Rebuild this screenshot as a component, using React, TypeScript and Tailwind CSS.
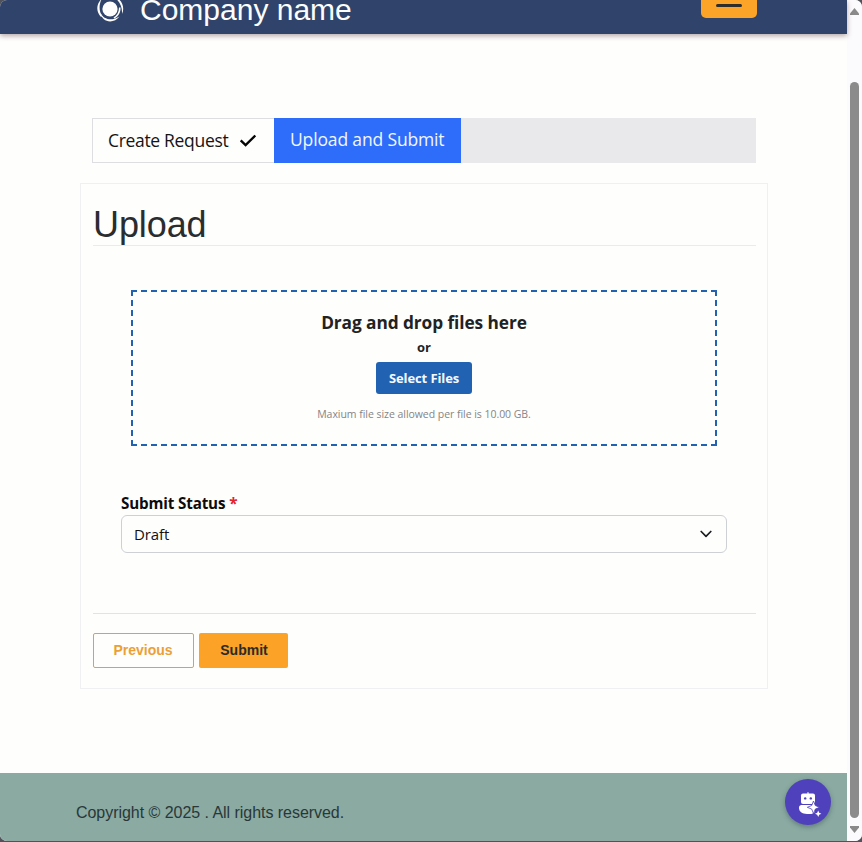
const segoe = "font-['Open_Sans','Noto_Sans',sans-serif]";
const arial = "font-['Liberation_Sans',Arial,sans-serif]";

function Header() {
  return (
    <header className="relative z-10 flex h-[34px] shrink-0 items-end bg-[#30446b] shadow-[0_2px_5px_rgba(70,40,50,0.4)]">
      <svg className="ml-[96px] mb-[11px] h-7 w-7 shrink-0" viewBox="0 0 28 28" fill="#fdfdfd">
        <circle cx="14" cy="14" r="7.6" />
        <path d="M6 3.5C0 9 0 16.500 4.500 21.500L6.800 21.800C2.800 17 2.500 9.500 6 3.500Z" />
        <path d="M4.500 17.500C7 24.500 15.500 26 21.500 22.500L23.500 21.500C18 29 6 28 4.500 17.500Z" />
        <path d="M17 1.500C25 3 29.500 11.500 26 19C26.500 11.500 23.500 5.500 17 1.500Z" />
        <path d="M24.500 12.500C24.800 17.500 22.500 21 18.500 23.500L17.500 22.500C21 20.500 23 17 23 12.500Z" />
      </svg>
      <span className="ml-4 mb-[9px] whitespace-nowrap text-[30px] leading-[30px] text-[#fdfdfd]">Company name</span>
      <button className="mb-4 ml-auto mr-[90px] flex h-[34px] w-14 items-end justify-center rounded-[5px] bg-[#fba428] pb-[11px]" aria-label="Menu">
        <span className="h-[3px] w-[26px] rounded-full bg-[#2d2d2d]" />
      </button>
    </header>
  );
}

function Steps() {
  return (
    <nav className={`ml-[92px] flex h-[45px] w-[664px] bg-[#e9e9ec] text-[18px] ${segoe}`}>
      <div className="flex w-[182px] shrink-0 items-center border border-r-0 border-[#dddde2] bg-[#fefefd] pl-[15px] text-[#141414]">
        <span className="w-[121px] whitespace-nowrap text-[17.5px] tracking-[-0.32px]">Create Request</span>
        <svg className="ml-[10px] h-[13px] w-[18px]" viewBox="0 0 18 13" fill="none">
          <path d="M1.7 6.3 6.6 11 16.3 1.5" stroke="#050505" strokeWidth="2.4" />
        </svg>
      </div>
      <div className="flex w-[187px] items-center bg-[#2d6df9] pb-0.5 pl-4 text-[#f1f6ff]">
        <span className="whitespace-nowrap text-[17.5px] tracking-[-0.15px]">Upload and Submit</span>
      </div>
    </nav>
  );
}

function Dropzone() {
  return (
    <div className={`ml-[38px] mt-11 flex h-[156px] w-[586px] flex-col items-center border-2 border-dashed border-[#2163b2] text-[#222] ${segoe}`}>
      <div className="mt-[19px] whitespace-nowrap text-[17.3px] font-bold leading-6 tracking-[-0.08px]">Drag and drop files here</div>
      <div className="mt-[2px] text-[13px] font-bold leading-5">or</div>
      <button className="mt-[5px] flex h-8 w-24 items-center justify-center whitespace-nowrap rounded-[3px] bg-[#2163b2] pt-px text-[13px] font-bold tracking-[-0.1px] text-[#f5faff]">Select Files</button>
      <div className="mt-3 whitespace-nowrap text-[10.5px] leading-4 tracking-[-0.04px] text-[#858585]">Maxium file size allowed per file is 10.00 GB.</div>
    </div>
  );
}

function StatusField() {
  return (
    <div className={`ml-[28px] mt-[46px] w-[606px] ${segoe}`}>
      <label className="block h-[23px] whitespace-nowrap text-[15.2px] font-bold leading-[22px] tracking-[-0.15px] text-[#0c0c0c]">
        Submit Status <span className="text-[#e3222e]">*</span>
      </label>
      <div className="flex h-[38px] items-center justify-between rounded-[6px] border border-[#cdd0d5] pl-3 pr-[14px] text-[15px] text-[#111]">
        <span className="tracking-[-0.1px]">Draft</span>
        <svg className="h-3 w-3" viewBox="0 0 12 12" fill="none">
          <path d="M1.2 3.5 6 8.3 10.8 3.5" stroke="#1a1d20" strokeWidth="1.7" strokeLinecap="round" strokeLinejoin="round" />
        </svg>
      </div>
    </div>
  );
}

function UploadCard() {
  return (
    <main className="ml-20 mt-5 h-[506px] w-[688px] border border-[#f0f0f3] pl-3 pr-[11px]">
      <h1 className="mt-5 h-[42px] border-b border-[#ebebec] text-[36px] leading-[41px] tracking-[-0.1px] text-[#2a2d30]">Upload</h1>
      <Dropzone />
      <StatusField />
      <div className="mt-[60px] flex gap-[5px] border-t border-[#e2e4e4] pt-[19px] text-[14px] font-bold">
        <button className="h-[35px] w-[101px] rounded-[2px] border border-[#c5a866] pr-px text-[#eba037]">Previous</button>
        <button className="h-[35px] w-[89px] rounded-[2px] bg-[#fba227] pl-px text-[#2d2a27]">Submit</button>
      </div>
    </main>
  );
}

function Scrollbar() {
  return (
    <div className="flex w-[15px] shrink-0 flex-col items-center bg-[#fbfafd]">
      <svg className="mt-2 h-[7px] w-[9px]" viewBox="0 0 9 7"><path d="M4.5 0 9 5.5V7H0V5.5Z" fill="#8a8a8a" /></svg>
      <div className="mt-[67px] h-[736px] w-[9px] rounded-full bg-[#8b8b8b]" />
      <svg className="mt-2 h-[7px] w-[9px]" viewBox="0 0 9 7"><path d="M0 0H9V1.5L4.5 7 0 1.5Z" fill="#8a8a8a" /></svg>
    </div>
  );
}

function Assistant() {
  return (
    <button aria-label="Assistant" className="mr-4 mt-1.5 flex h-[46px] w-[46px] items-center justify-center rounded-full bg-[#4f40bb] shadow-[0_2px_5px_rgba(40,60,60,0.4)]">
      <svg className="h-[46px] w-[46px]" viewBox="0 0 46 46">
        <path d="M22.4 13.2h1.2v2h-1.2z" fill="#fff" />
        <rect x="16" y="14.6" width="14" height="10.4" rx="2" fill="#fff" />
        <circle cx="20.2" cy="19.4" r="1.2" fill="#4f40bb" />
        <circle cx="25.8" cy="19.4" r="1.2" fill="#4f40bb" />
        <path d="M16.500 26H29.500V33.500L26.500 35H22C17 35 14 32.500 14 28.800 14 27 15 26 16.500 26Z" fill="#fff" />
        <path d="M28.500 22 30.300 26.500 34.500 28.300 30.300 30.100 28.500 34.500 26.700 30.100 22.300 28.300 26.700 26.500Z" fill="#fff" stroke="#4f40bb" strokeWidth="0.8" />
        <path d="M33.200 31.500 34.200 33.700 36.400 34.700 34.200 35.700 33.200 37.900 32.200 35.700 30 34.700 32.200 33.700Z" fill="#fff" />
      </svg>
    </button>
  );
}

export default function App() {
  return (
    <div className={`h-[842px] w-[862px] overflow-hidden bg-[#50535a] ${arial}`}>
      <div className="flex h-[841px] overflow-hidden rounded-[7px] bg-[#fefefd]">
        <div className="flex w-[847px] shrink-0 flex-col">
          <Header />
          <div className="h-[84px] shrink-0" />
          <Steps />
          <UploadCard />
          <footer className="mt-[84px] flex flex-1 items-start justify-between bg-[#8aaaa2] pl-[76px]">
            <span className="mt-[30px] whitespace-nowrap text-[16px] leading-5 tracking-[-0.04px] text-[#293739]">Copyright © 2025 . All rights reserved.</span>
            <Assistant />
          </footer>
        </div>
        <Scrollbar />
      </div>
    </div>
  );
}
